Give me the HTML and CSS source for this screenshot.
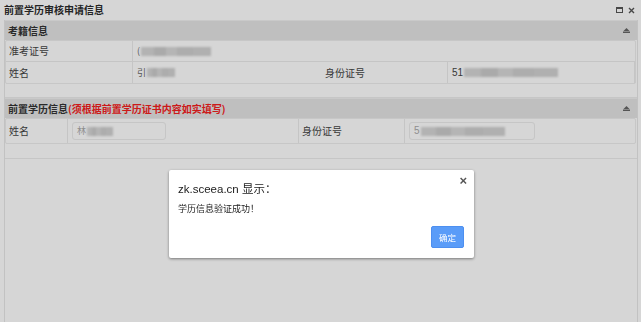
FILE: index.html
```html
<!DOCTYPE html>
<html lang="zh-CN">
<head>
<meta charset="utf-8">
<title>前置学历审核申请信息</title>
<link rel="stylesheet" href="styles.css">
</head>
<body>
<div class="window">
  <div class="titlebar">
    <span class="title">前置学历审核申请信息</span>
    <div class="tools">
      <svg class="tool" width="7" height="6" viewBox="0 0 7 6"><rect x="0.5" y="0.5" width="6" height="5" fill="none" stroke="#555" stroke-width="1"/><rect x="0" y="0" width="7" height="2" fill="#555"/></svg>
      <svg class="tool" width="7" height="7" viewBox="0 0 7 7"><path d="M1 1L6 6M6 1L1 6" stroke="#555" stroke-width="1.4"/></svg>
    </div>
  </div>
  <div class="content">
    <section class="panel">
      <div class="panel-head">
        <span>考籍信息</span>
        <svg class="collapse" width="7" height="5" viewBox="0 0 7 5"><path d="M3.5 0L6.5 3H0.5Z" fill="#666"/><rect x="0" y="3.5" width="7" height="1.5" fill="#666"/></svg>
      </div>
      <div class="grid grid-a">
        <div class="cell lbl">准考证号</div>
        <div class="cell val span3"><span class="ch">(</span><span class="blur w70"></span></div>
        <div class="cell lbl">姓名</div>
        <div class="cell val"><span class="ch">引</span><span class="blur w28"></span></div>
        <div class="cell lbl">身份证号</div>
        <div class="cell val"><span class="num">51</span><span class="blur w94"></span></div>
      </div>
      <div class="spacer s1"></div>
    </section>
    <section class="panel">
      <div class="panel-head">
        <span>前置学历信息<em class="warn">(须根据前置学历证书内容如实填写)</em></span>
        <svg class="collapse" width="7" height="5" viewBox="0 0 7 5"><path d="M3.5 0L6.5 3H0.5Z" fill="#666"/><rect x="0" y="3.5" width="7" height="1.5" fill="#666"/></svg>
      </div>
      <div class="grid grid-b">
        <div class="cell lbl">姓名</div>
        <div class="cell val"><div class="input i1"><span class="ch faint">林</span><span class="blur w26"></span></div></div>
        <div class="cell lbl">身份证号</div>
        <div class="cell val"><div class="input i2"><span class="num faint">5</span><span class="blur w84"></span></div></div>
      </div>
      <div class="spacer s2"></div>
    </section>
  </div>
</div>

<div class="backdrop">
  <div class="dialog">
    <div class="dlg-title">zk.sceea.cn 显示：</div>
    <span class="dlg-close">×</span>
    <div class="dlg-msg">学历信息验证成功！</div>
    <div class="dlg-actions"><button class="btn">确定</button></div>
  </div>
</div>
</body>
</html>
```

FILE: styles.css
```css
* { box-sizing: border-box; }
html, body { margin: 0; padding: 0; }
body {
  width: 641px;
  height: 322px;
  overflow: hidden;
  background: #ffffff;
  font-family: "Noto Sans CJK SC", "Liberation Sans", sans-serif;
  font-size: 10px;
  color: #333;
}
.window { width: 641px; height: 322px; display: flex; flex-direction: column; }
.titlebar {
  height: 20px;
  display: flex;
  align-items: center;
  justify-content: space-between;
  padding: 0 5px 0 4px;
}
.title { font-weight: bold; font-size: 10px; line-height: 12px; color: #2c2c2c; }
.tools { display: flex; gap: 5px; align-items: center; padding-right: 1px; }
.tool { display: block; }
.content {
  flex: 1;
  margin: 0 3px 0 4px;
  border-left: 1px solid #e8e8e8;
  border-right: 1px solid #e8e8e8;
  display: flex;
  flex-direction: column;
}
.panel { display: flex; flex-direction: column; }
.panel-head {
  height: 20px;
  background: #e4e4e4;
  border-top: 1px solid #f0f0f0;
  display: flex;
  align-items: center;
  justify-content: space-between;
  padding: 0 7px 0 3px;
  font-weight: bold;
  font-size: 10px;
  line-height: 12px;
  color: #333;
}
.warn { font-style: normal; color: #f42020; font-weight: bold; }
.collapse { display: block; }
.grid {
  display: grid;
  border: 1px solid #ededed;
  border-radius: 2px;
  margin-right: 1px;
}
.grid-a { grid-template-columns: 127px 189px 126px 1fr; grid-auto-rows: 21px; }
.grid-b { grid-template-columns: 62px 231px 106px 1fr; grid-auto-rows: 24px; }
.cell {
  display: flex;
  align-items: center;
  border-right: 1px solid #ebebeb;
  border-bottom: 1px solid #ebebeb;
  padding-left: 3px;
  font-size: 10px;
  line-height: 12px;
  color: #444;
}
.cell:nth-child(4n) { border-right: none; }
.grid-a .cell:nth-last-child(-n+4) { border-bottom: none; }
.grid-b .cell { border-bottom: none; }
.span3 { grid-column: span 3; border-right: none; }
.val { padding-left: 4px; }
.ch { color: #666; font-size: 9px; }
.num { color: #444; font-size: 10px; font-family: "Liberation Sans", sans-serif; }
.faint { color: #aaa; }
.blur {
  display: inline-block;
  height: 9px;
  background: linear-gradient(90deg, #d6d6d6 0 18%, #cbcbcb 18% 36%, #d8d8d8 36% 52%, #cecece 52% 74%, #d2d2d2 74% 100%);
  filter: blur(1px);
  margin-left: 1px;
}
.w70 { width: 70px; }
.w28 { width: 28px; }
.w94 { width: 94px; }
.w26 { width: 26px; }
.w84 { width: 84px; }
.input {
  height: 18px;
  border: 1px solid #ececec;
  border-radius: 3px;
  display: flex;
  align-items: center;
  padding-left: 4px;
  background: #fff;
}
.i1 { width: 94px; }
.i2 { width: 126px; }
.spacer { border-bottom: 1px solid #ececec; }
.s1 { height: 14px; }
.s2 { height: 15px; }

.backdrop {
  position: fixed;
  inset: 0;
  background: rgba(0, 0, 0, 0.16);
}
.dialog {
  position: absolute;
  left: 169px;
  top: 170px;
  width: 305px;
  height: 88px;
  background: #fff;
  border-radius: 2px;
  box-shadow: 0 1px 3px rgba(0,0,0,0.45);
  padding: 12px 10px 10px 9px;
  display: flex;
  flex-direction: column;
}
.dlg-title {
  font-family: "Liberation Sans", "Noto Sans CJK SC", sans-serif;
  font-size: 11.5px;
  line-height: 14px;
  color: #222;
}
.dlg-close {
  position: absolute;
  right: 7px;
  top: 3px;
  font-family: "Liberation Sans", sans-serif;
  font-size: 13px;
  font-weight: bold;
  color: #555;
}
.dlg-msg { margin-top: 7px; font-size: 9px; line-height: 11px; color: #222; }
.dlg-actions { margin-top: auto; display: flex; justify-content: flex-end; }
.btn {
  width: 33px;
  height: 22px;
  border: 1px solid #4d8ff0;
  border-radius: 2px;
  background: #5a9cf8;
  color: #fff;
  font-family: "Noto Sans CJK SC", sans-serif;
  font-size: 8.5px;
  padding: 0;
}
```
